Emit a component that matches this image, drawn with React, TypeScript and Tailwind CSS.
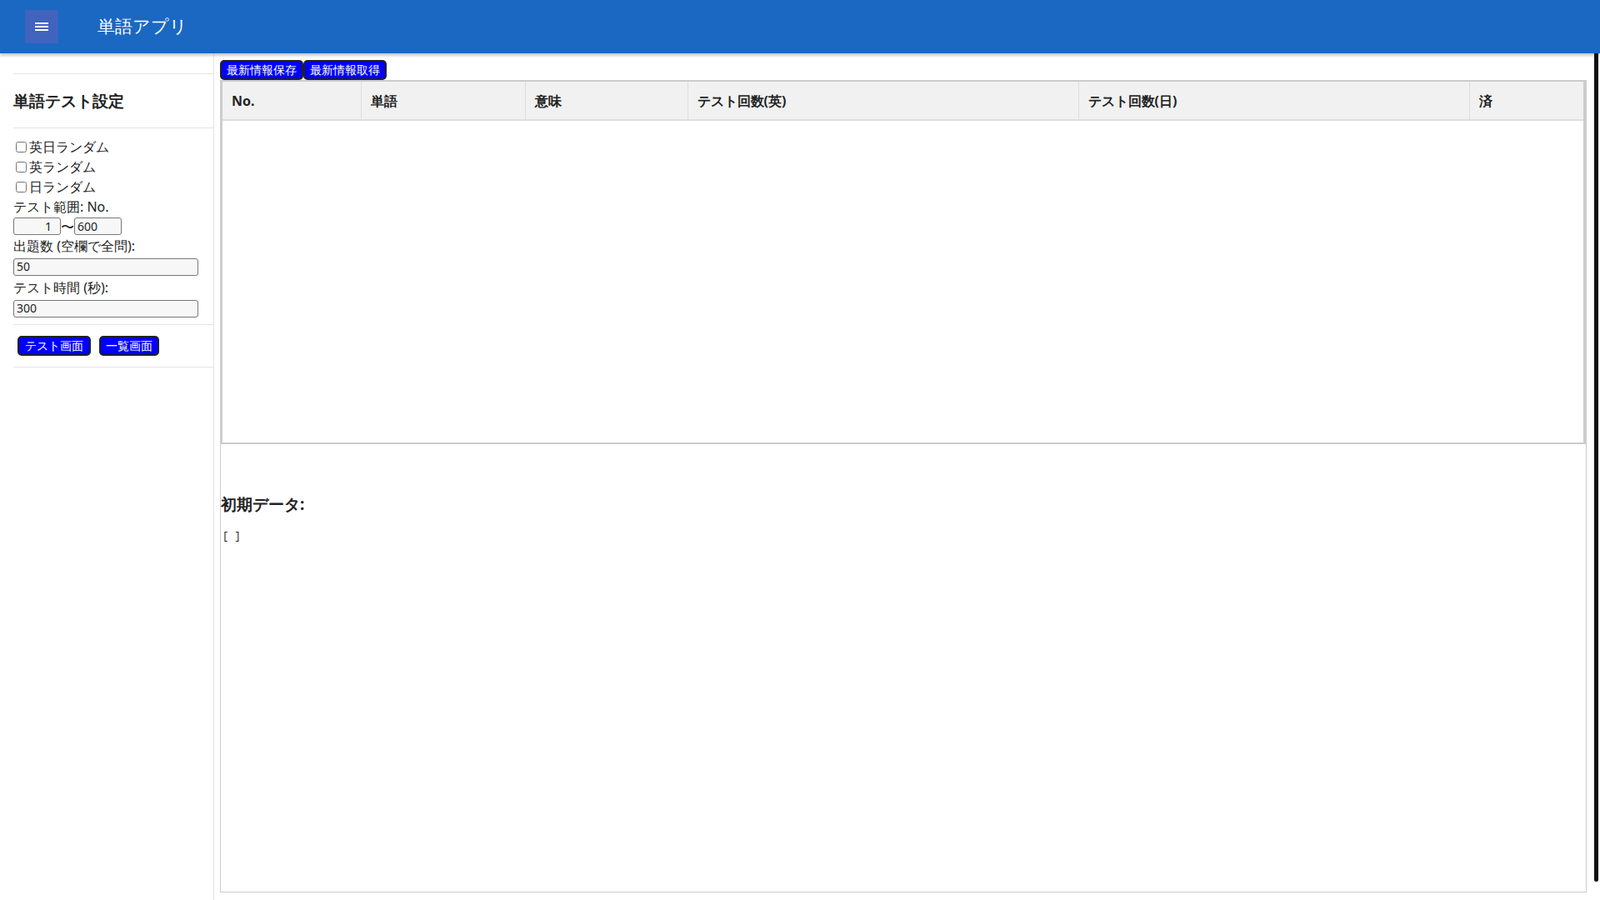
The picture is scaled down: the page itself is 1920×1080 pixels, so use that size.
import React from "react";

const serif = "font-['Liberation_Serif','Noto_Sans_CJK_JP',serif]";
const sans = "font-['Liberation_Sans','Noto_Sans_CJK_JP',sans-serif]";

const columns = [
  { label: "No.", w: "w-[166px]", serif: true },
  { label: "単語", w: "w-[197px]" },
  { label: "意味", w: "w-[195px]" },
  { label: "テスト回数(英)", w: "w-[469px]" },
  { label: "テスト回数(日)", w: "w-[469px]" },
  { label: "済", w: "" },
];

function BlueButton({ children, className = "" }: { children: React.ReactNode; className?: string }) {
  return (
    <button
      className={`bg-[#0000ff] text-white border-2 border-[#222] rounded-[5px] text-[14px] leading-[20px] px-[6px] ${sans} ${className}`}
    >
      {children}
    </button>
  );
}

export default function App() {
  return (
    <div className={`w-[1920px] h-[1080px] overflow-hidden bg-white text-[#222] ${serif} relative`}>
      <header className="h-[64px] bg-[#1a68c2] flex items-center pl-[30px] pr-[10px] shadow-[0_3px_3px_rgba(0,0,0,0.2)] relative z-10">
        <div className="w-[40px] h-[40px] bg-[#4163be] flex items-center justify-center">
          <svg width="16" height="12" viewBox="0 0 16 12" fill="white">
            <rect x="0" y="1" width="16" height="2" />
            <rect x="0" y="5" width="16" height="2" />
            <rect x="0" y="9" width="16" height="2" />
          </svg>
        </div>
        <span className={`ml-[47px] text-white text-[21px] ${sans}`}>単語アプリ</span>
      </header>

      <div className="flex h-[1016px]">
        <aside className="w-[257px] border-r border-[#e4e4e4] pl-[16px] pt-[24px] shrink-0">
          <div className="border-t border-[#e4e4e4]" />
          <h2 className={`text-[19px] font-bold py-[22px] leading-[20px] ${sans}`}>単語テスト設定</h2>
          <div className="border-t border-[#e4e4e4]" />
          <div className="pt-[10px] text-[16px] leading-[24px] pr-[20px]">
            {["英日ランダム", "英ランダム", "日ランダム"].map((t) => (
              <label key={t} className="flex items-center">
                <input type="checkbox" className="w-[13px] h-[13px] ml-[3px] mr-[3px] accent-[#888]" />
                <span className={sans}>{t}</span>
              </label>
            ))}
            <div>
              <span className={sans}>テスト範囲</span>: No.
            </div>
            <div className="flex items-center h-[23px]">
              <input
                defaultValue="1"
                className={`w-[57px] h-[21px] border border-[#777] rounded-[3px] bg-[#f7f7f7] text-right pr-[10px] text-[14px] ${sans}`}
              />
              <span className={sans}>〜</span>
              <input
                defaultValue="600"
                className={`w-[57px] h-[21px] border border-[#777] rounded-[3px] bg-[#f7f7f7] pl-[3px] text-[14px] ${sans}`}
              />
            </div>
            <div>
              <span className={sans}>出題数 </span>(<span className={sans}>空欄で全問</span>):
            </div>
            <input
              defaultValue="50"
              className={`w-[222px] h-[21px] border border-[#777] rounded-[3px] bg-[#f7f7f7] pl-[3px] text-[14px] ${sans}`}
            />
            <div className="mt-[2px]">
              <span className={sans}>テスト時間 </span>(<span className={sans}>秒</span>):
            </div>
            <input
              defaultValue="300"
              className={`w-[222px] h-[21px] border border-[#777] rounded-[3px] bg-[#f7f7f7] pl-[3px] text-[14px] ${sans}`}
            />
          </div>
          <div className="border-t border-[#e4e4e4] mt-[8px]" />
          <div className="flex gap-[10px] pl-[5px] py-[13px]">
            <BlueButton className="px-[7px]">テスト画面</BlueButton>
            <BlueButton>一覧画面</BlueButton>
          </div>
          <div className="border-t border-[#e4e4e4]" />
        </aside>

        <main className="flex-1 pl-[7px] pt-[8px] pr-[16px]">
          <div className="flex">
            <BlueButton className="px-[4px] text-[13px]">最新情報保存</BlueButton>
            <BlueButton className="px-[4px] text-[13px]">最新情報取得</BlueButton>
          </div>
          <div className="border border-[#ccc] border-t-0 h-[975px]">
            <div className="border-2 border-[#ccc] border-r-[3px] h-[437px]">
              <table className="w-full border-collapse">
                <thead>
                  <tr className="bg-[#f1f1f1] h-[46px]">
                    {columns.map((c) => (
                      <th
                        key={c.label}
                        className={`${c.w} text-left font-bold text-[16px] pl-[11px] border-r border-b-2 border-[#dedede] last:border-r-0 ${c.serif ? serif : sans}`}
                      >
                        {c.label}
                      </th>
                    ))}
                  </tr>
                </thead>
              </table>
            </div>
            <h3 className={`text-[19px] font-bold mt-[58px] ${sans}`}>初期データ:</h3>
            <pre className={`text-[12px] mt-[15px] pl-[2px] ${sans}`}>[ ]</pre>
          </div>
        </main>
      </div>

      <div className="absolute right-[2px] top-0 w-[5px] h-[1058px] bg-[#111] rounded-b-[3px]" />
    </div>
  );
}
